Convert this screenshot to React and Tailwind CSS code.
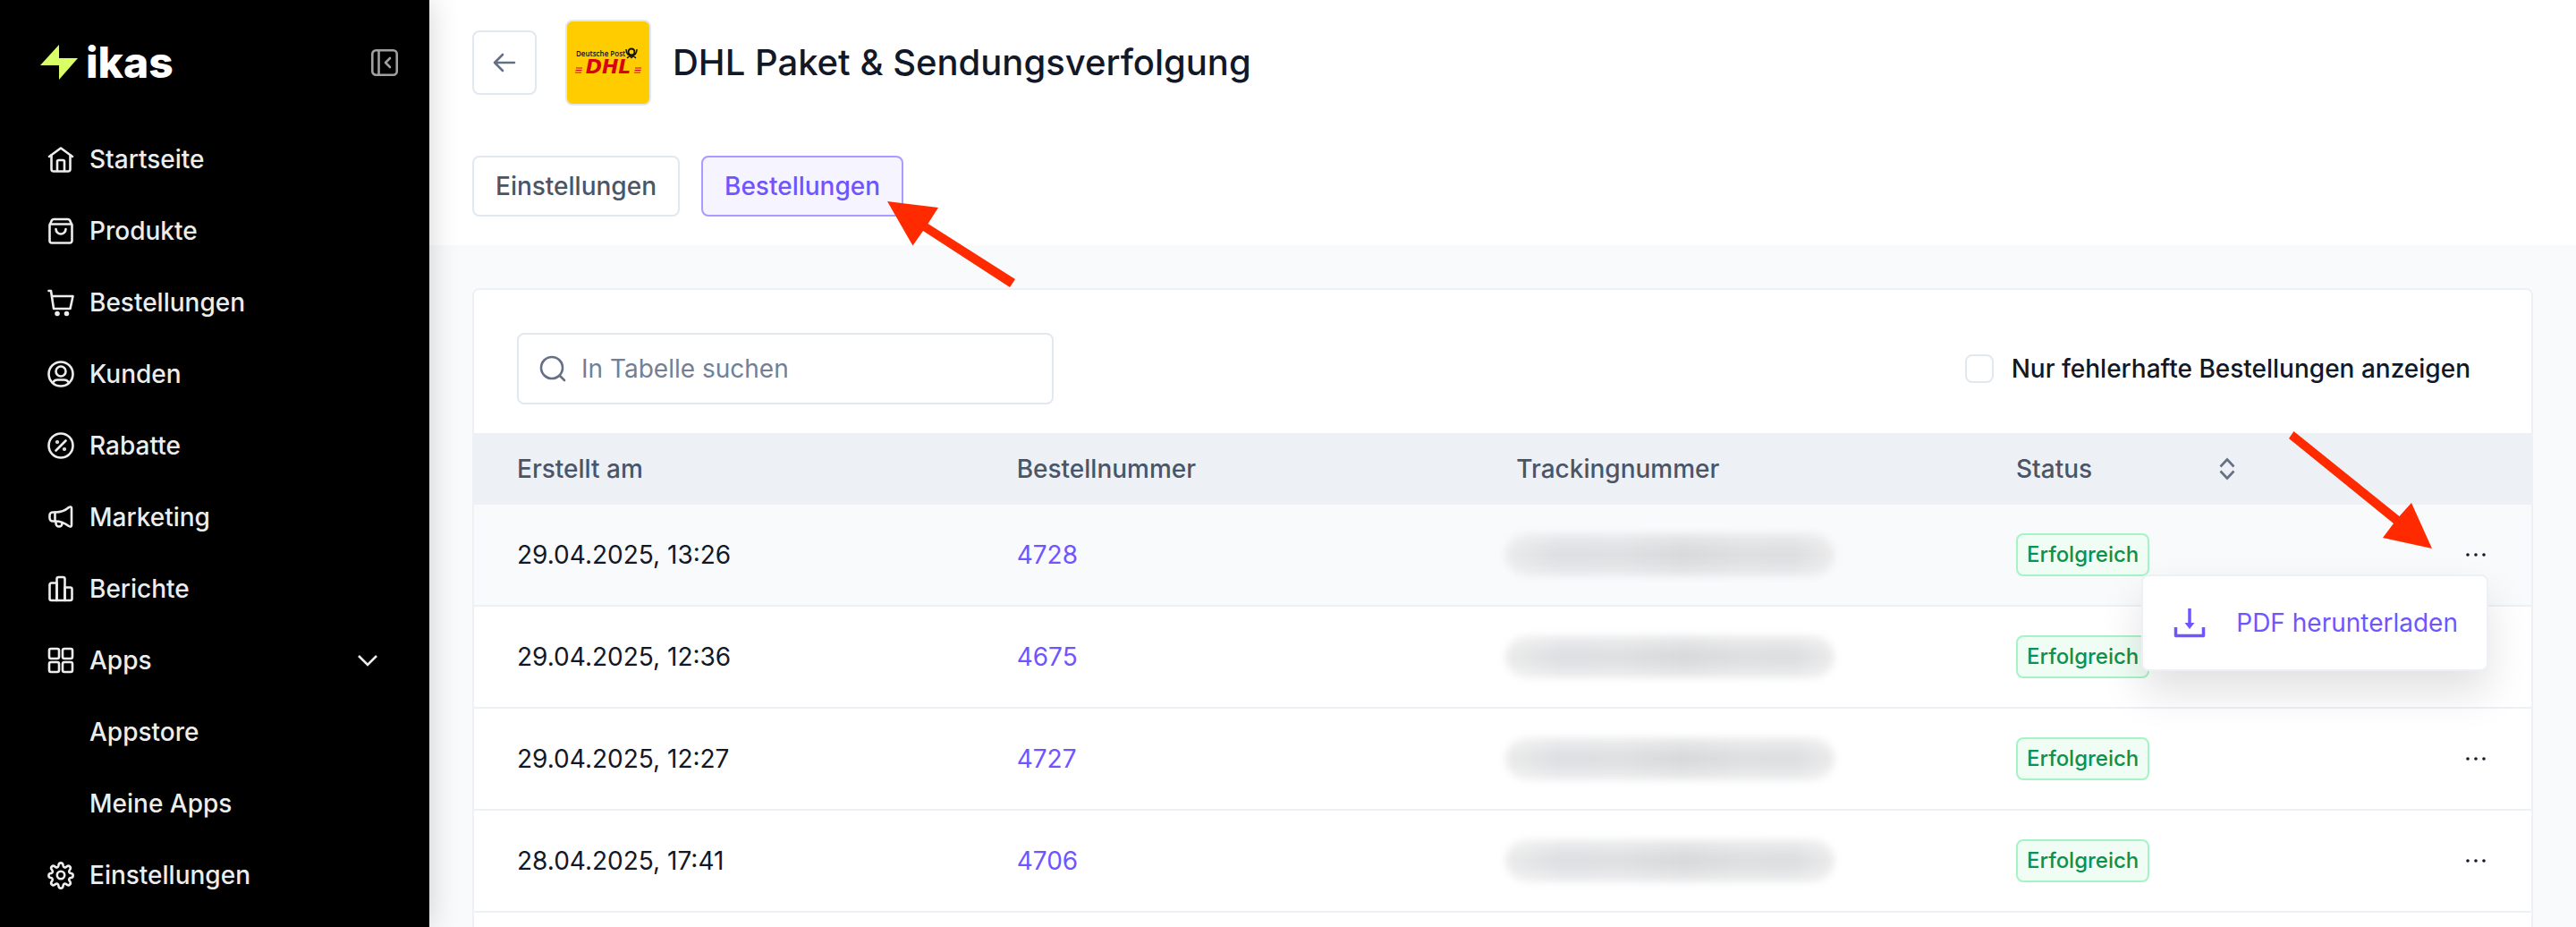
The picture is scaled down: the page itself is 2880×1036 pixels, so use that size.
import React, { useState } from "react";

const iconProps = {
  width: 32,
  height: 32,
  viewBox: "0 0 32 32",
  fill: "none",
  stroke: "currentColor",
  strokeWidth: 2.6,
  strokeLinecap: "round",
  strokeLinejoin: "round",
  className: "shrink-0",
  "aria-hidden": true,
};

const HomeIcon = () => (
  <svg {...iconProps}>
    <path d="M3 13 16 3.5 29 13" />
    <path d="M5.5 11.5V27a2.5 2.5 0 0 0 2.5 2.5h16a2.5 2.5 0 0 0 2.5-2.5V11.5" />
    <path d="M12 29V18.5a1.5 1.5 0 0 1 1.5-1.5h5a1.5 1.5 0 0 1 1.5 1.5V29" />
  </svg>
);

const ProductIcon = () => (
  <svg {...iconProps}>
    <path d="M3.5 9.5V27A2.5 2.5 0 0 0 6 29.5h20a2.5 2.5 0 0 0 2.5-2.5V9.5L26 4a2.5 2.5 0 0 0-2-1H8a2.5 2.5 0 0 0-2 1Z" />
    <path d="M4 8.5h24" />
    <path d="M10.5 14a5.5 5.5 0 0 0 11 0" />
  </svg>
);

const CartIcon = () => (
  <svg {...iconProps}>
    <path d="M2.5 3H5l3 20h18.5L29.5 9H6" />
    <circle cx="12" cy="28.5" r="1.5" fill="currentColor" />
    <circle cx="22.5" cy="28.5" r="1.5" fill="currentColor" />
  </svg>
);

const CustomerIcon = () => (
  <svg {...iconProps}>
    <circle cx="16" cy="16" r="13.5" />
    <circle cx="16" cy="13" r="5.5" />
    <path d="M7 26c1-2.5 3-3.5 5.5-3.5h7c2.5 0 4.5 1 5.5 3.5" />
  </svg>
);

const DiscountIcon = () => (
  <svg {...iconProps}>
    <circle cx="16" cy="16" r="13.5" />
    <path d="m10.5 21.5 11-11" />
    <circle cx="12" cy="12" r="0.8" fill="currentColor" />
    <circle cx="20" cy="20" r="0.8" fill="currentColor" />
  </svg>
);

const MarketingIcon = () => (
  <svg {...iconProps}>
    <path d="M10 10.5H7A3.5 3.5 0 0 0 3.5 14v3A3.5 3.5 0 0 0 7 20.5h3c6 0 11 2.5 15 5.5 1.5 1 3 .5 3-1V6c0-1.5-1.5-2-3-1-4 3.5-9 5.5-15 5.5Z" />
    <path d="M9.5 10.5v10M10.5 21v2a3.5 3.5 0 0 0 7 0v-1" />
  </svg>
);

const ReportIcon = () => (
  <svg {...iconProps}>
    <path d="M11.5 29h-6a2 2 0 0 1-2-2V11.5a2 2 0 0 1 2-2h6Z" />
    <path d="M11.5 29V5a2 2 0 0 1 2-2h5a2 2 0 0 1 2 2v24Z" />
    <path d="M20.5 14.5h6a2 2 0 0 1 2 2V27a2 2 0 0 1-2 2h-6Z" />
  </svg>
);

const AppsIcon = () => (
  <svg {...iconProps}>
    <rect x="3" y="3" width="11" height="11" rx="2" />
    <rect x="18" y="3" width="11" height="11" rx="2" />
    <rect x="3" y="18" width="11" height="11" rx="2" />
    <rect x="18" y="18" width="11" height="11" rx="2" />
  </svg>
);

const SettingsIcon = () => (
  <svg {...iconProps}>
    <circle cx="16" cy="16" r="4.2" />
    <path d="M13.6 4.3a2.45 2.45 0 0 1 4.8 0l.3 1.5a2 2 0 0 0 3 1.25l1.3-.85a2.45 2.45 0 0 1 3.4 3.4l-.85 1.3a2 2 0 0 0 1.25 3l.9.2a2.45 2.45 0 0 1 0 4.8l-1 .2a2 2 0 0 0-1.25 3l.95 1.3a2.45 2.45 0 0 1-3.4 3.4l-1.3-.85a2 2 0 0 0-3 1.25l-.3 1.5a2.45 2.45 0 0 1-4.8 0l-.3-1.5a2 2 0 0 0-3-1.25L9 26.8a2.45 2.45 0 0 1-3.4-3.4l.85-1.3a2 2 0 0 0-1.25-3l-.8-.2a2.45 2.45 0 0 1 0-4.8l.9-.2a2 2 0 0 0 1.25-3L5.6 9.6A2.45 2.45 0 0 1 9 6.2l1.3.85a2 2 0 0 0 3-1.25Z" />
  </svg>
);

const DhlLogo = () => (
  <div className="size-24 overflow-hidden rounded-lg border-2 border-[#e2e8f0] bg-[#ffcc00]">
    <svg width="92" height="92" viewBox="0 0 92 92" role="img" aria-label="Deutsche Post DHL">
      <text x="10" y="39" fontFamily="Open Sans, sans-serif" fontSize="8" fontWeight="600" fill="#111">
        Deutsche Post
      </text>
      <g fill="none" stroke="#111" strokeWidth="2">
        <circle cx="72" cy="34" r="3.5" />
        <path d="M66 31c0 5 2.5 7 6 7s6-2 6-7M67 41l3-2.5 2 2 2-2 3 2.5" strokeWidth="1.5" />
      </g>
      <text
        x="46"
        y="58"
        textAnchor="middle"
        fontFamily="DejaVu Sans, sans-serif"
        fontSize="22"
        fontWeight="700"
        fontStyle="italic"
        fill="#d40511"
      >
        DHL
      </text>
      <path d="M10 52h7M9.5 54.5h7M9 57h7M76 52h7M75.5 54.5h7M75 57h7" stroke="#d40511" strokeWidth="1" />
    </svg>
  </div>
);

const navItems = [
  { label: "Startseite", Icon: HomeIcon },
  { label: "Produkte", Icon: ProductIcon },
  { label: "Bestellungen", Icon: CartIcon },
  { label: "Kunden", Icon: CustomerIcon },
  { label: "Rabatte", Icon: DiscountIcon },
  { label: "Marketing", Icon: MarketingIcon },
  { label: "Berichte", Icon: ReportIcon },
  { label: "Apps", Icon: AppsIcon, expandable: true },
  { label: "Appstore", sub: true },
  { label: "Meine Apps", sub: true },
  { label: "Einstellungen", Icon: SettingsIcon },
];

const orders = [
  { created: "29.04.2025, 13:26", number: "4728", active: true },
  { created: "29.04.2025, 12:36", number: "4675" },
  { created: "29.04.2025, 12:27", number: "4727" },
  { created: "28.04.2025, 17:41", number: "4706" },
];

const Sidebar = () => (
  <aside className="z-20 w-[480px] shrink-0 bg-black text-[#ededed] shadow-[0_0_32px_rgba(0,0,0,0.18)]">
    <div className="flex h-[138px] items-start justify-between pt-10 pr-[34px] pl-11">
      <a href="#" className="flex items-center gap-2 text-white">
        <svg width="44" height="40" viewBox="0 0 44 40" aria-hidden="true">
          <path d="M22 0v15h21L22 39V23H1Z" fill="#d8ff65" />
        </svg>
        <span className="text-5xl leading-[60px] font-extrabold">ikas</span>
      </a>
      <button type="button" aria-label="Menü einklappen" className="mt-3.5 text-[#a0a0a0]">
        <svg {...iconProps}>
          <rect x="2.3" y="2.3" width="27.4" height="27.4" rx="4" />
          <path d="M9.5 3v26M22 11l-5 5 5 5" />
        </svg>
      </button>
    </div>
    <nav>
      <ul>
        {navItems.map(({ label, Icon, sub, expandable }) => (
          <li key={label}>
            <a
              href="#"
              className={
                sub
                  ? "flex h-20 items-center pl-[100px] text-[28px] font-medium"
                  : "flex h-20 items-center gap-4 pr-14 pl-[52px] text-[28px] font-medium"
              }
            >
              {Icon && <Icon />}
              {label}
              {expandable && (
                <svg
                  width="26"
                  height="26"
                  viewBox="0 0 26 26"
                  fill="none"
                  stroke="currentColor"
                  strokeWidth="2.6"
                  className="ml-auto"
                  aria-hidden="true"
                >
                  <path d="m3 8 10 10L23 8" />
                </svg>
              )}
            </a>
          </li>
        ))}
      </ul>
    </nav>
  </aside>
);

const Header = () => (
  <header className="relative z-10 bg-white px-12 pt-[22px] pb-8">
    <div className="flex items-center">
      <button
        type="button"
        aria-label="Zurück"
        className="flex size-[72px] items-center justify-center rounded-lg border-2 border-[#e2e8f0] text-[#667085]"
      >
        <svg {...iconProps}>
          <path d="M27 16H5M14 7l-9 9 9 9" />
        </svg>
      </button>
      <div className="mr-6 ml-8">
        <DhlLogo />
      </div>
      <h1 className="text-[40px] leading-[48px] font-medium">DHL Paket &amp; Sendungsverfolgung</h1>
    </div>
    <div className="mt-14 flex gap-6">
      <button
        type="button"
        className="h-[68px] rounded-lg border-2 border-[#e2e8f0] px-6 text-[28px] font-medium text-[#4a5568]"
      >
        Einstellungen
      </button>
      <div className="relative">
        <button
          type="button"
          className="h-[68px] rounded-lg border-2 border-[#a99bff] bg-[#f6f4ff] px-6 text-[28px] font-medium text-[#6f55ff]"
        >
          Bestellungen
        </button>
        <svg
          width="144"
          height="98"
          viewBox="0 0 144 98"
          className="absolute top-[51px] left-[208px] max-w-none"
          aria-hidden="true"
        >
          <path d="M0 0 57 7 45.5 25 143 87 137 96 40 33 28.5 49.5Z" fill="#ff2a00" />
        </svg>
      </div>
    </div>
  </header>
);

const RowMenu = () => (
  <div className="absolute top-[78px] right-12 z-10 rounded-lg border-2 border-[#edf1f6] bg-white shadow-[0_24px_48px_rgba(0,0,0,0.12)]">
    <button
      type="button"
      className="flex h-[104px] items-center gap-8 px-8 text-[28px] whitespace-nowrap text-[#6f55ff]"
    >
      <svg
        width="40"
        height="40"
        viewBox="0 0 40 40"
        fill="none"
        stroke="currentColor"
        strokeWidth="3.5"
        strokeLinejoin="round"
        aria-hidden="true"
      >
        <path d="M20 4v18M4.5 25v9.5h31V25" />
        <path d="M14.5 20h11L20 27Z" fill="currentColor" stroke="none" />
      </svg>
      PDF herunterladen
    </button>
  </div>
);

const OrdersTable = () => (
  <table className="w-full table-fixed border-separate border-spacing-0 text-left text-[28px]">
    <colgroup>
      <col />
      <col />
      <col />
      <col className="w-[348px]" />
      <col className="w-[276px]" />
    </colgroup>
    <thead>
      <tr className="h-20 bg-[#edf1f6] text-[#4a5568]">
        <th className="px-12 font-medium">Erstellt am</th>
        <th className="px-12 font-medium">Bestellnummer</th>
        <th className="px-12 font-medium">Trackingnummer</th>
        <th className="px-12 font-medium">
          <div className="flex items-center justify-between">
            Status
            <button type="button" aria-label="Nach Status sortieren" className="text-[#667085]">
              <svg
                width="32"
                height="32"
                viewBox="0 0 32 32"
                fill="none"
                stroke="currentColor"
                strokeWidth="2.6"
                aria-hidden="true"
              >
                <path d="m8.5 13.500 7.500-8 7.500 8M8.500 18.500l7.500 8 7.500-8" />
              </svg>
            </button>
          </div>
        </th>
        <th aria-label="Aktionen" />
      </tr>
    </thead>
    <tbody className="[&_td]:border-b-2 [&_td]:border-[#edf1f6]">
      {orders.map((order) => (
        <tr key={order.number} className={order.active ? "h-[114px] bg-[#f9fafc]" : "h-[114px]"}>
          <td className="px-12">{order.created}</td>
          <td className="px-12">
            <a href="#" className="text-[#6f55ff]">
              {order.number}
            </a>
          </td>
          <td className="px-9">
            <div className="blur-[4px]" aria-label="Trackingnummer verborgen">
              <div className="h-12 w-[368px] rounded-3xl bg-[linear-gradient(90deg,#eaeaea,#dcdde0_16%,#dddee0_35%,#d6d7d9_54%,#dcddde_72%,#dbdcde_88%,#eaeaea)] mask-[linear-gradient(rgba(0,0,0,0.5),black_50%,rgba(0,0,0,0.5))]" />
            </div>
          </td>
          <td className="px-12">
            <span className="inline-flex h-12 items-center rounded-lg border-2 border-[#a6f4c5] bg-[#effdf5] px-2.5 align-middle text-2xl font-medium text-[#099250]">
              Erfolgreich
            </span>
          </td>
          <td className="relative px-12">
            <button type="button" aria-label={"Aktionen für " + order.number} className="ml-auto block">
              <svg width="28" height="28" viewBox="0 0 28 28" fill="currentColor" aria-hidden="true">
                <circle cx="5" cy="14" r="1.8" />
                <circle cx="14" cy="14" r="1.8" />
                <circle cx="23" cy="14" r="1.8" />
              </svg>
            </button>
            {order.active && (
              <>
                <RowMenu />
                <svg
                  width="162"
                  height="132"
                  viewBox="0 0 162 132"
                  className="absolute -top-[82px] left-[5px] z-10 max-w-none"
                  aria-hidden="true"
                >
                  <path d="M5.5 0 123.5 95 137 80 160 131 105 119 117 103 0 8Z" fill="#ff2a00" />
                </svg>
              </>
            )}
          </td>
        </tr>
      ))}
    </tbody>
  </table>
);

const App = () => {
  const [search, setSearch] = useState("");

  return (
    <div className="flex h-screen overflow-hidden bg-[#f8fafc] font-['Inter',sans-serif] text-[#111827]">
      <Sidebar />
      <div className="flex min-w-0 grow flex-col">
        <Header />
        <main className="flex grow flex-col px-12 pt-12">
          <section className="grow rounded-t-lg border-2 border-b-0 border-[#edf1f6] bg-white">
            <div className="flex items-center justify-between px-12 pt-12 pb-8">
              <label className="flex h-20 w-[600px] items-center gap-4 rounded-lg border-2 border-[#e2e8f0] px-[22px]">
                <svg {...iconProps} className="shrink-0 text-[#667085]">
                  <circle cx="15" cy="15" r="12" />
                  <path d="m24 24 5 5" />
                </svg>
                <input
                  type="text"
                  aria-label="In Tabelle suchen"
                  placeholder="In Tabelle suchen"
                  value={search}
                  onChange={(e) => setSearch(e.target.value)}
                  className="min-w-0 grow text-[28px] outline-none placeholder:text-[#718096]"
                />
              </label>
              <label className="flex items-center gap-5 pr-5 text-[28px] font-medium">
                <input
                  type="checkbox"
                  className="size-8 appearance-none rounded-lg border-2 border-[#e2e8f0] bg-white"
                />
                Nur fehlerhafte Bestellungen anzeigen
              </label>
            </div>
            <OrdersTable />
          </section>
        </main>
      </div>
    </div>
  );
};

export default App;
